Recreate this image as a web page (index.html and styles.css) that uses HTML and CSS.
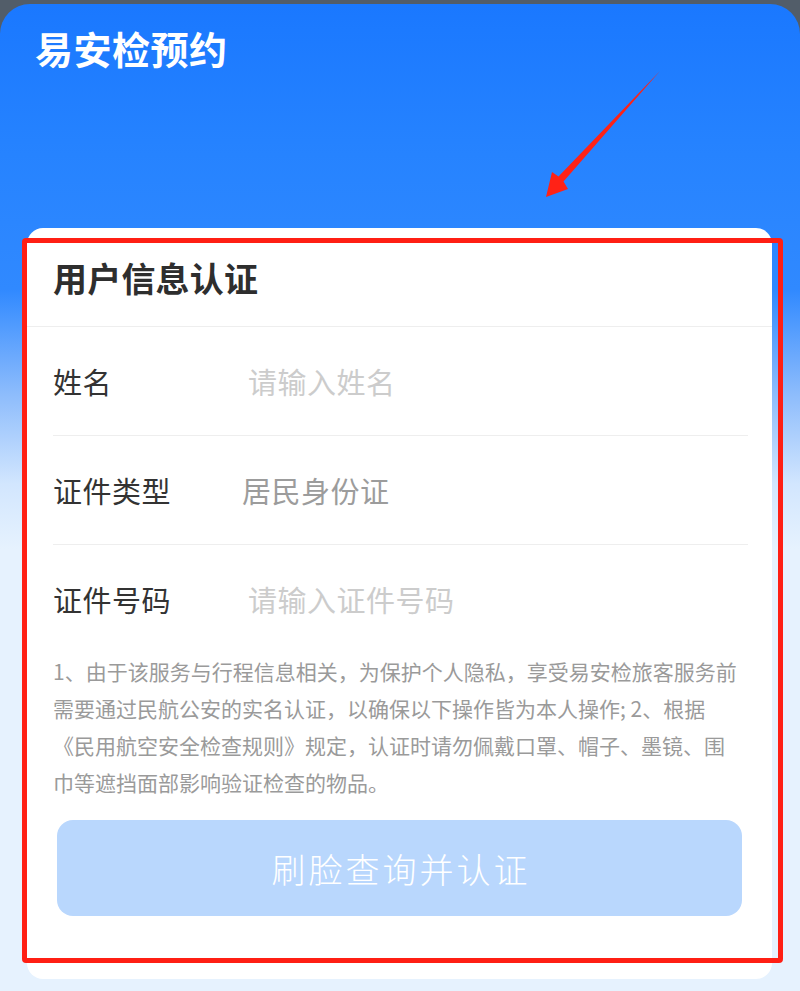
FILE: index.html
```html
<!DOCTYPE html>
<html lang="zh-CN">
<head>
<meta charset="utf-8">
<title>易安检预约</title>
<link rel="stylesheet" href="styles.css">
</head>
<body>
<div class="page">
  <h1 class="title">易安检预约</h1>
  <svg class="arrow" viewBox="0 0 800 991" width="800" height="991" aria-hidden="true">
    <polygon points="660,71 563.5,181.5 568,189 546,197 552,172 558.5,176.5" fill="#ff2216"/>
  </svg>
  <section class="card">
    <div class="highlight"></div>
    <header class="card-head">用户信息认证</header>
    <div class="form">
      <div class="row">
        <span class="label">姓名</span>
        <input class="field" type="text" placeholder="请输入姓名">
      </div>
      <div class="row">
        <span class="label">证件类型</span>
        <span class="value">居民身份证</span>
      </div>
      <div class="row row-last">
        <span class="label">证件号码</span>
        <input class="field" type="text" placeholder="请输入证件号码">
      </div>
      <p class="note">1、由于该服务与行程信息相关，为保护个人隐私，享受易安检旅客服务前<br>需要通过民航公安的实名认证，以确保以下操作皆为本人操作; 2、根据<br>《民用航空安全检查规则》规定，认证时请勿佩戴口罩、帽子、墨镜、围<br>巾等遮挡面部影响验证检查的物品。</p>
      <button class="submit" type="button">刷脸查询并认证</button>
    </div>
  </section>
</div>
</body>
</html>
```

FILE: styles.css
```css
html, body {
  margin: 0;
  padding: 0;
}
body {
  background: #525d69;
  font-family: "Noto Sans CJK SC", "Noto Sans", sans-serif;
  width: 800px;
  height: 991px;
  overflow: hidden;
  position: relative;
}
.page {
  margin-top: 4px;
  height: 987px;
  border-radius: 30px 30px 0 0;
  background: linear-gradient(180deg, #1a78ff 0px, #2683ff 150px, #3089ff 285px, #8dbcfc 390px, #d2e6fe 480px, #e6f2fe 545px, #e6f2fe 100%);
  padding-top: 22px;
  box-sizing: border-box;
}
.title {
  margin: 0;
  padding-left: 35px;
  color: #ffffff;
  font-size: 38px;
  line-height: 44px;
  font-weight: 700;
  letter-spacing: 0.5px;
}
.arrow {
  position: absolute;
  left: 0;
  top: 0;
  pointer-events: none;
}
.card {
  position: relative;
  margin: 158px 28px 0 27px;
  height: 751px;
  background: #ffffff;
  border-radius: 16px;
}
.highlight {
  position: absolute;
  left: -5px;
  top: 10px;
  width: 761px;
  height: 725px;
  box-sizing: border-box;
  border: 5px solid #ff1f14;
  border-radius: 4px;
  pointer-events: none;
}
.card-head {
  height: 98px;
  border-bottom: 1px solid #eeeeee;
  display: flex;
  align-items: center;
  padding-left: 26px;
  font-size: 34px;
  font-weight: 700;
  color: #2e2e2e;
  letter-spacing: 0.2px;
}
.form {
  padding: 0 24px 0 26px;
}
.row {
  height: 108px;
  border-bottom: 1px solid #eeeeee;
  display: flex;
  align-items: center;
}
.row-last {
  border-bottom: none;
}
.label {
  width: 189px;
  flex: none;
  font-size: 29px;
  color: #333333;
  letter-spacing: 0.5px;
}
.field {
  flex: 1;
  border: none;
  outline: none;
  background: transparent;
  padding: 0 0 0 6px;
  font-family: "Noto Sans CJK SC", "Noto Sans", sans-serif;
  font-size: 29px;
  color: #333333;
  letter-spacing: 0.5px;
}
.field::placeholder {
  color: #cccccc;
}
.value {
  font-size: 29px;
  color: #9c9c9c;
  letter-spacing: 0.5px;
}
.note {
  margin: 0;
  font-size: 21px;
  line-height: 37px;
  color: #9a9a9a;
  white-space: nowrap;
}
.submit {
  display: block;
  width: 685px;
  height: 96px;
  margin: 19px 0 0 4px;
  border: none;
  border-radius: 16px;
  background: #b9d7fd;
  color: #ffffff;
  font-family: "Noto Sans CJK SC", "Noto Sans", sans-serif;
  font-size: 34px;
  font-weight: 300;
  letter-spacing: 3px;
  padding: 0 0 0 3px;
}
```
